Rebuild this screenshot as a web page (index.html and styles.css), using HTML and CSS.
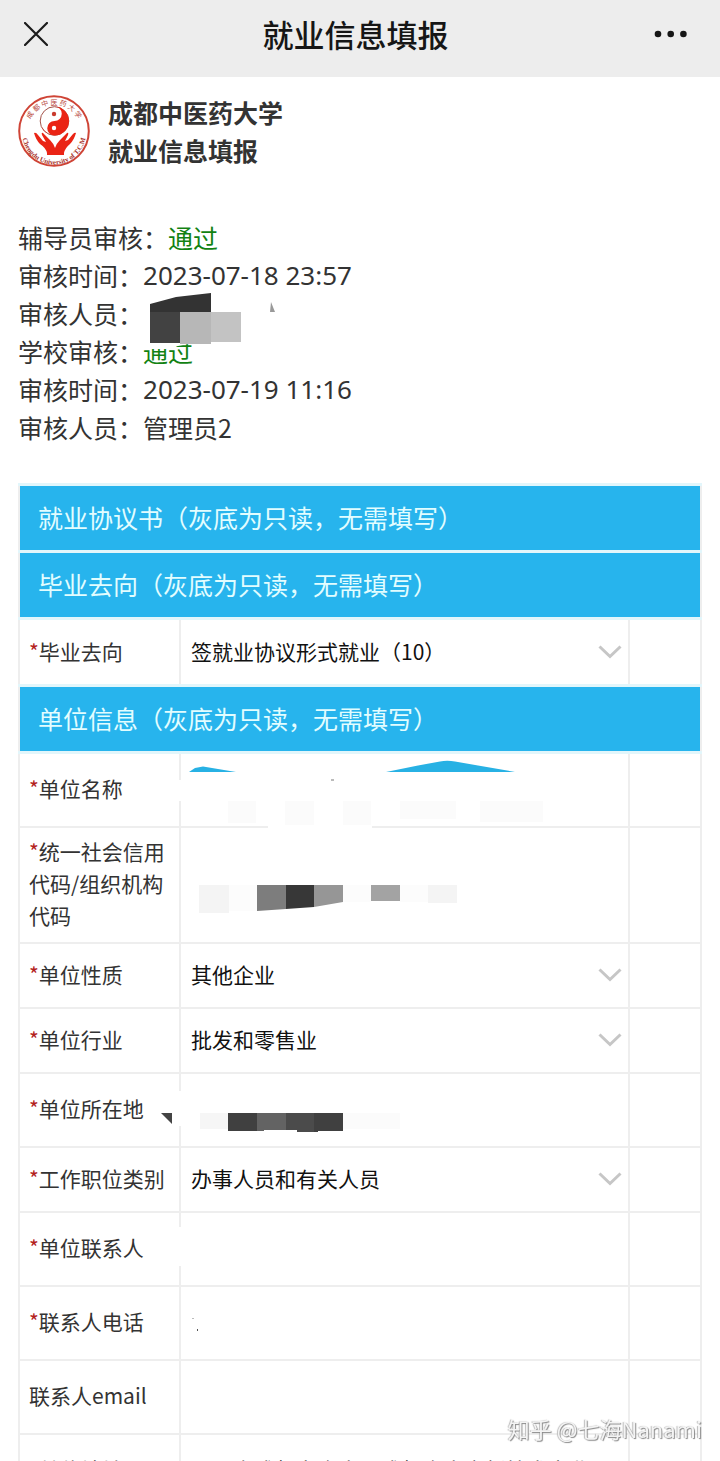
FILE: index.html
```html
<!DOCTYPE html>
<html lang="zh-CN">
<head>
<meta charset="utf-8">
<meta name="viewport" content="width=device-width, initial-scale=1">
<title>就业信息填报</title>
<link rel="stylesheet" href="styles.css">
</head>
<body>
<div class="page">
  <header class="topbar">
    <button class="icon-button" type="button" aria-label="关闭">
      <svg width="24" height="24" viewBox="0 0 24 24"><path d="M1 1 23 23M23 1 1 23" fill="none" stroke="#1c1c1c" stroke-width="2.2" stroke-linecap="round"/></svg>
    </button>
    <h1 class="topbar-title">就业信息填报</h1>
    <button class="icon-button icon-button-end" type="button" aria-label="更多">
      <svg width="33" height="8" viewBox="0 0 33 8" fill="#161616"><circle cx="4" cy="4" r="3.3"/><circle cx="16.7" cy="4" r="3.3"/><circle cx="29.4" cy="4" r="3.3"/></svg>
    </button>
  </header>

  <main class="content">
    <section class="school">
      <svg class="logo" width="72" height="72" viewBox="0 0 72 72" role="img" aria-label="校徽">
        <defs>
          <path id="arc-top" d="M9.500 36A26.500 26.500 0 0 1 62.500 36"/>
          <path id="arc-bottom" d="M4.500 32A32 32 0 1 0 67.500 32"/>
        </defs>
        <circle cx="36" cy="36" r="34.800" fill="#fff" stroke="#cf4436" stroke-width="2"/>
        <text class="logo-cn"><textPath href="#arc-top" startOffset="50%" text-anchor="middle">成 都 中 医 药 大 学</textPath></text>
        <text class="logo-en"><textPath href="#arc-bottom" startOffset="50%" text-anchor="middle">Chengdu University of T.C.M</textPath></text>
        <circle cx="36.500" cy="26" r="14.300" fill="#fff" stroke="#a5534a" stroke-width="1"/>
        <path d="M36.500 11.500A14.500 14.500 0 0 1 36.500 40.500A7.250 7.250 0 0 1 36.500 26A7.250 7.250 0 0 0 36.500 11.500Z" fill="#ea2415"/>
        <path d="M36.500 40.500A14.500 14.500 0 0 1 23 31Q28 40 36.500 40.500Z" fill="#ea2415"/>
        <circle cx="36" cy="19" r="2.200" fill="#c93a2e"/>
        <circle cx="36" cy="33" r="2.200" fill="#fff"/>
        <path d="M16 38q2-1 4 2l5 6 3 1-4-7q-1-3 1-2l7 7q4 4 5 8 1-4 5-8l7-7q2-1 1 2l-3 6 3-1 5-6q2-2 3-1-2 7-6 11-5 4-6 9v2H29v-2q-1-5-7-9-4-4-6-11Z" fill="#ea2415"/>
      </svg>
      <h2 class="school-title">成都中医药大学<br>就业信息填报</h2>
    </section>

    <section class="review">
      <p class="review-line">辅导员审核：<span class="passed">通过</span></p>
      <p class="review-line">审核时间：<time class="stamp">2023-07-18 23:57</time></p>
      <p class="review-line">审核人员：<span class="hidden-name">
        <svg class="mask" width="136" height="56" viewBox="-1 -2 136 56" aria-hidden="true">
          <path d="M0 0H100V46L66 48H44L34 50L22 53H0Z" fill="#fff"/>
          <path d="M6 8 32 1 67-3V18H6Z" fill="#333"/>
          <path d="M6 16H37V47H6Z" fill="#424242"/>
          <path d="M36 16H67V48H36Z" fill="#b7b7b7"/>
          <path d="M67 16H97V46H67Z" fill="#c3c3c3"/>
          <path d="M127 6 131 16 126 16Z" fill="#999"/>
        </svg></span></p>
      <p class="review-line">学校审核：<span class="passed">通过</span></p>
      <p class="review-line">审核时间：<time class="stamp">2023-07-19 11:16</time></p>
      <p class="review-line">审核人员：管理员2</p>
    </section>

    <form>
    <table class="form-table">
      <colgroup><col class="col-label"><col><col class="col-note"></colgroup>
      <tbody>
      <tr><th class="banner" colspan="3">就业协议书（灰底为只读，无需填写）</th></tr>
      <tr><th class="banner" colspan="3">毕业去向（灰底为只读，无需填写）</th></tr>
      <tr class="row-banner">
        <th class="name"><label for="destination"><span class="star">*</span>毕业去向</label></th>
        <td class="value"><div class="picker"><select id="destination"><option>签就业协议形式就业（10）</option></select><svg class="chevron" width="24" height="14" viewBox="0 0 24 14"><path d="M1.500 1.500 12 11.500 22.500 1.500"/></svg></div></td>
        <td></td>
      </tr>
      <tr><th class="banner" colspan="3">单位信息（灰底为只读，无需填写）</th></tr>
      <tr class="row-input">
        <th class="name"><label for="company"><span class="star">*</span>单位名称</label></th>
        <td class="value"><input id="company" type="text">
          <svg class="mask" width="448" height="74" viewBox="181 753 448 74" aria-hidden="true">
            <path d="M178 779H186V800H178ZM268 823H372V829H268Z" fill="#fff"/>
            <path d="M189 771 195 767 203 765.500 215 767.500 236 771ZM386 771 418 764.500 440 760.500Q447 759 455 760.500L478 764.500 515 771Z" fill="#27b1e4"/>
            <path d="M228 800H256V822H228ZM285 800H314V824H285ZM343 800H371V824H343ZM400 800H456V818H400ZM480 800H543V821H480Z" fill="#fbfbfb"/>
            <path d="M331 778H334V780H331Z" fill="#bbb"/>
          </svg></td>
        <td></td>
      </tr>
      <tr class="row-long">
        <th class="name"><label for="code"><span class="star">*</span>统一社会信用代码/组织机构代码</label></th>
        <td class="value"><input id="code" type="text">
          <svg class="mask" width="448" height="116" viewBox="181 827 448 116" aria-hidden="true">
            <path d="M199 884H229V912H199ZM428 884H457V902H428Z" fill="#f4f4f4"/>
            <path d="M229 884H257V910H229ZM343 884H371V901H343ZM400 884H428V901H400Z" fill="#fcfcfc"/>
            <path d="M257 884H286V908L257 910Z" fill="#7d7d7d"/>
            <path d="M286 884H314V906L286 908Z" fill="#373737"/>
            <path d="M314 884H343V901L314 906Z" fill="#969696"/>
            <path d="M371 884H400V900H371Z" fill="#a3a3a3"/>
          </svg></td>
        <td></td>
      </tr>
      <tr class="row-select">
        <th class="name"><label for="nature"><span class="star">*</span>单位性质</label></th>
        <td class="value"><div class="picker"><select id="nature"><option>其他企业</option></select><svg class="chevron" width="24" height="14" viewBox="0 0 24 14"><path d="M1.500 1.500 12 11.500 22.500 1.500"/></svg></div></td>
        <td></td>
      </tr>
      <tr class="row-select">
        <th class="name"><label for="industry"><span class="star">*</span>单位行业</label></th>
        <td class="value"><div class="picker"><select id="industry"><option>批发和零售业</option></select><svg class="chevron" width="24" height="14" viewBox="0 0 24 14"><path d="M1.500 1.500 12 11.500 22.500 1.500"/></svg></div></td>
        <td></td>
      </tr>
      <tr class="row-input">
        <th class="name"><label for="location"><span class="star">*</span>单位所在地</label></th>
        <td class="value"><input id="location" type="text">
          <svg class="mask" width="448" height="74" viewBox="181 1073 448 74" aria-hidden="true">
            <path d="M178 1090H186V1125H178Z" fill="#fff"/>
            <path d="M161 1112H172V1123Z" fill="#444"/>
            <path d="M200 1112H228V1128H200Z" fill="#f6f6f6"/>
            <path d="M343 1112H400V1128H343Z" fill="#fbfbfb"/>
            <path d="M228 1112H257V1130H228Z" fill="#404040"/>
            <path d="M257 1112H286V1129L264 1129 264 1130 257 1130Z" fill="#636363"/>
            <path d="M286 1112H314V1131H297V1129H286Z" fill="#4b4b4b"/>
            <path d="M314 1112H343V1130H318V1131H314Z" fill="#404040"/>
          </svg></td>
        <td></td>
      </tr>
      <tr class="row-select">
        <th class="name"><label for="position"><span class="star">*</span>工作职位类别</label></th>
        <td class="value"><div class="picker"><select id="position"><option>办事人员和有关人员</option></select><svg class="chevron" width="24" height="14" viewBox="0 0 24 14"><path d="M1.500 1.500 12 11.500 22.500 1.500"/></svg></div></td>
        <td></td>
      </tr>
      <tr class="row-input">
        <th class="name"><label for="contact"><span class="star">*</span>单位联系人</label></th>
        <td class="value"><input id="contact" type="text">
          <svg class="mask" width="448" height="74" viewBox="181 1212 448 74" aria-hidden="true"><path d="M178 1226H186V1265H178Z" fill="#fff"/></svg></td>
        <td></td>
      </tr>
      <tr class="row-input">
        <th class="name"><label for="phone"><span class="star">*</span>联系人电话</label></th>
        <td class="value"><input id="phone" type="tel">
          <svg class="mask" width="448" height="74" viewBox="181 1286 448 74" aria-hidden="true"><path d="M192 1317H194V1318H192Z" fill="#bbb"/><path d="M197 1328H198V1330H197Z" fill="#555"/></svg></td>
        <td></td>
      </tr>
      <tr class="row-input">
        <th class="name"><label for="email">联系人email</label></th>
        <td class="value"><input id="email" type="email"></td>
        <td></td>
      </tr>
      <tr class="row-input">
        <th class="name"><label for="address"><span class="star">*</span>单位地址</label></th>
        <td class="value"><input id="address" type="text" value="四川省成都市金牛区成都金牛高新技术产业园"></td>
        <td></td>
      </tr>
      </tbody>
    </table>
    </form>
  </main>
  <div class="watermark">知乎 @七海Nanami</div>
</div>
</body>
</html>
```
FILE: styles.css
```css
* {
  box-sizing: border-box;
}

body {
  margin: 0;
  background: #fff;
  color: #333;
  font-family: "Noto Sans CJK SC", sans-serif;
  font-size: 25px;
}

h1, h2, p {
  margin: 0;
}

.page {
  height: 100vh;
  overflow: hidden;
}

.topbar {
  display: grid;
  grid-template-columns: 1fr auto 1fr;
  align-items: center;
  height: 77px;
  padding: 0 33px 10px 24px;
  background: #ededed;
}

.topbar-title {
  color: #161616;
  font-size: 31px;
  font-weight: 500;
  line-height: 40px;
}

.icon-button {
  display: flex;
  justify-self: start;
  padding: 0;
  border: 0;
  background: none;
}

.icon-button-end {
  justify-self: end;
}

.content {
  padding: 16px 18px 0;
}

.school {
  display: flex;
  align-items: center;
  gap: 18px;
}

.school-title {
  font-size: 25px;
  font-weight: 700;
  line-height: 38px;
}

.logo-cn {
  fill: #b8463c;
  font-size: 7px;
}

.logo-en {
  fill: #a8342c;
  font-family: "Liberation Serif", serif;
  font-size: 7px;
  font-weight: 700;
}

.review {
  margin: 49px 0 37px;
}

.review-line {
  display: flex;
  height: 38px;
  line-height: 38px;
}

.stamp {
  font-family: "Noto Sans", sans-serif;
  font-size: 26px;
}

.passed {
  color: #128212;
}

.hidden-name,
.value {
  position: relative;
}

.mask {
  position: absolute;
  top: 0;
  left: 0;
  overflow: visible;
  pointer-events: none;
}

.form-table {
  width: 100%;
  table-layout: fixed;
  border-collapse: collapse;
}

.col-label {
  width: 161px;
}

.col-note {
  width: 72px;
}

th, td {
  padding: 0;
  border: 2px solid #eee;
  font-weight: 400;
  text-align: left;
}

.banner {
  height: 67px;
  padding: 0 0 3px 18px;
  border-top: 3px solid #e2f6fb;
  border-bottom: 3px solid #e2f6fb;
  background: #27b4ed;
  color: #e2fdff;
  font-size: 25px;
}

.row-banner {
  height: 67px;
}

.row-select {
  height: 65px;
}

.row-input {
  height: 74px;
}

.row-long {
  height: 116px;
}

.name {
  padding: 0 0 3px 9px;
  font-size: 21px;
  line-height: 32px;
}

.name label {
  display: block;
}

.star {
  color: #b3211c;
}

.picker {
  display: grid;
  align-items: center;
}

.picker > * {
  grid-area: 1 / 1;
}

select,
input {
  width: 100%;
  height: 48px;
  padding: 0 0 3px 10px;
  border: 0;
  border-radius: 0;
  outline: 0;
  appearance: none;
  background: transparent;
  color: #111;
  font-family: inherit;
  font-size: 21px;
}

input {
  display: block;
}

.chevron {
  justify-self: end;
  margin-right: 6px;
  fill: none;
  stroke: #c6c6c6;
  stroke-width: 3;
  pointer-events: none;
}

.watermark {
  position: fixed;
  right: 18px;
  bottom: 18px;
  color: #f4f4f4;
  font-size: 22px;
  line-height: 30px;
  text-shadow: 1px 1px 1px #888, -1px 0 1px #bbb;
}
```
